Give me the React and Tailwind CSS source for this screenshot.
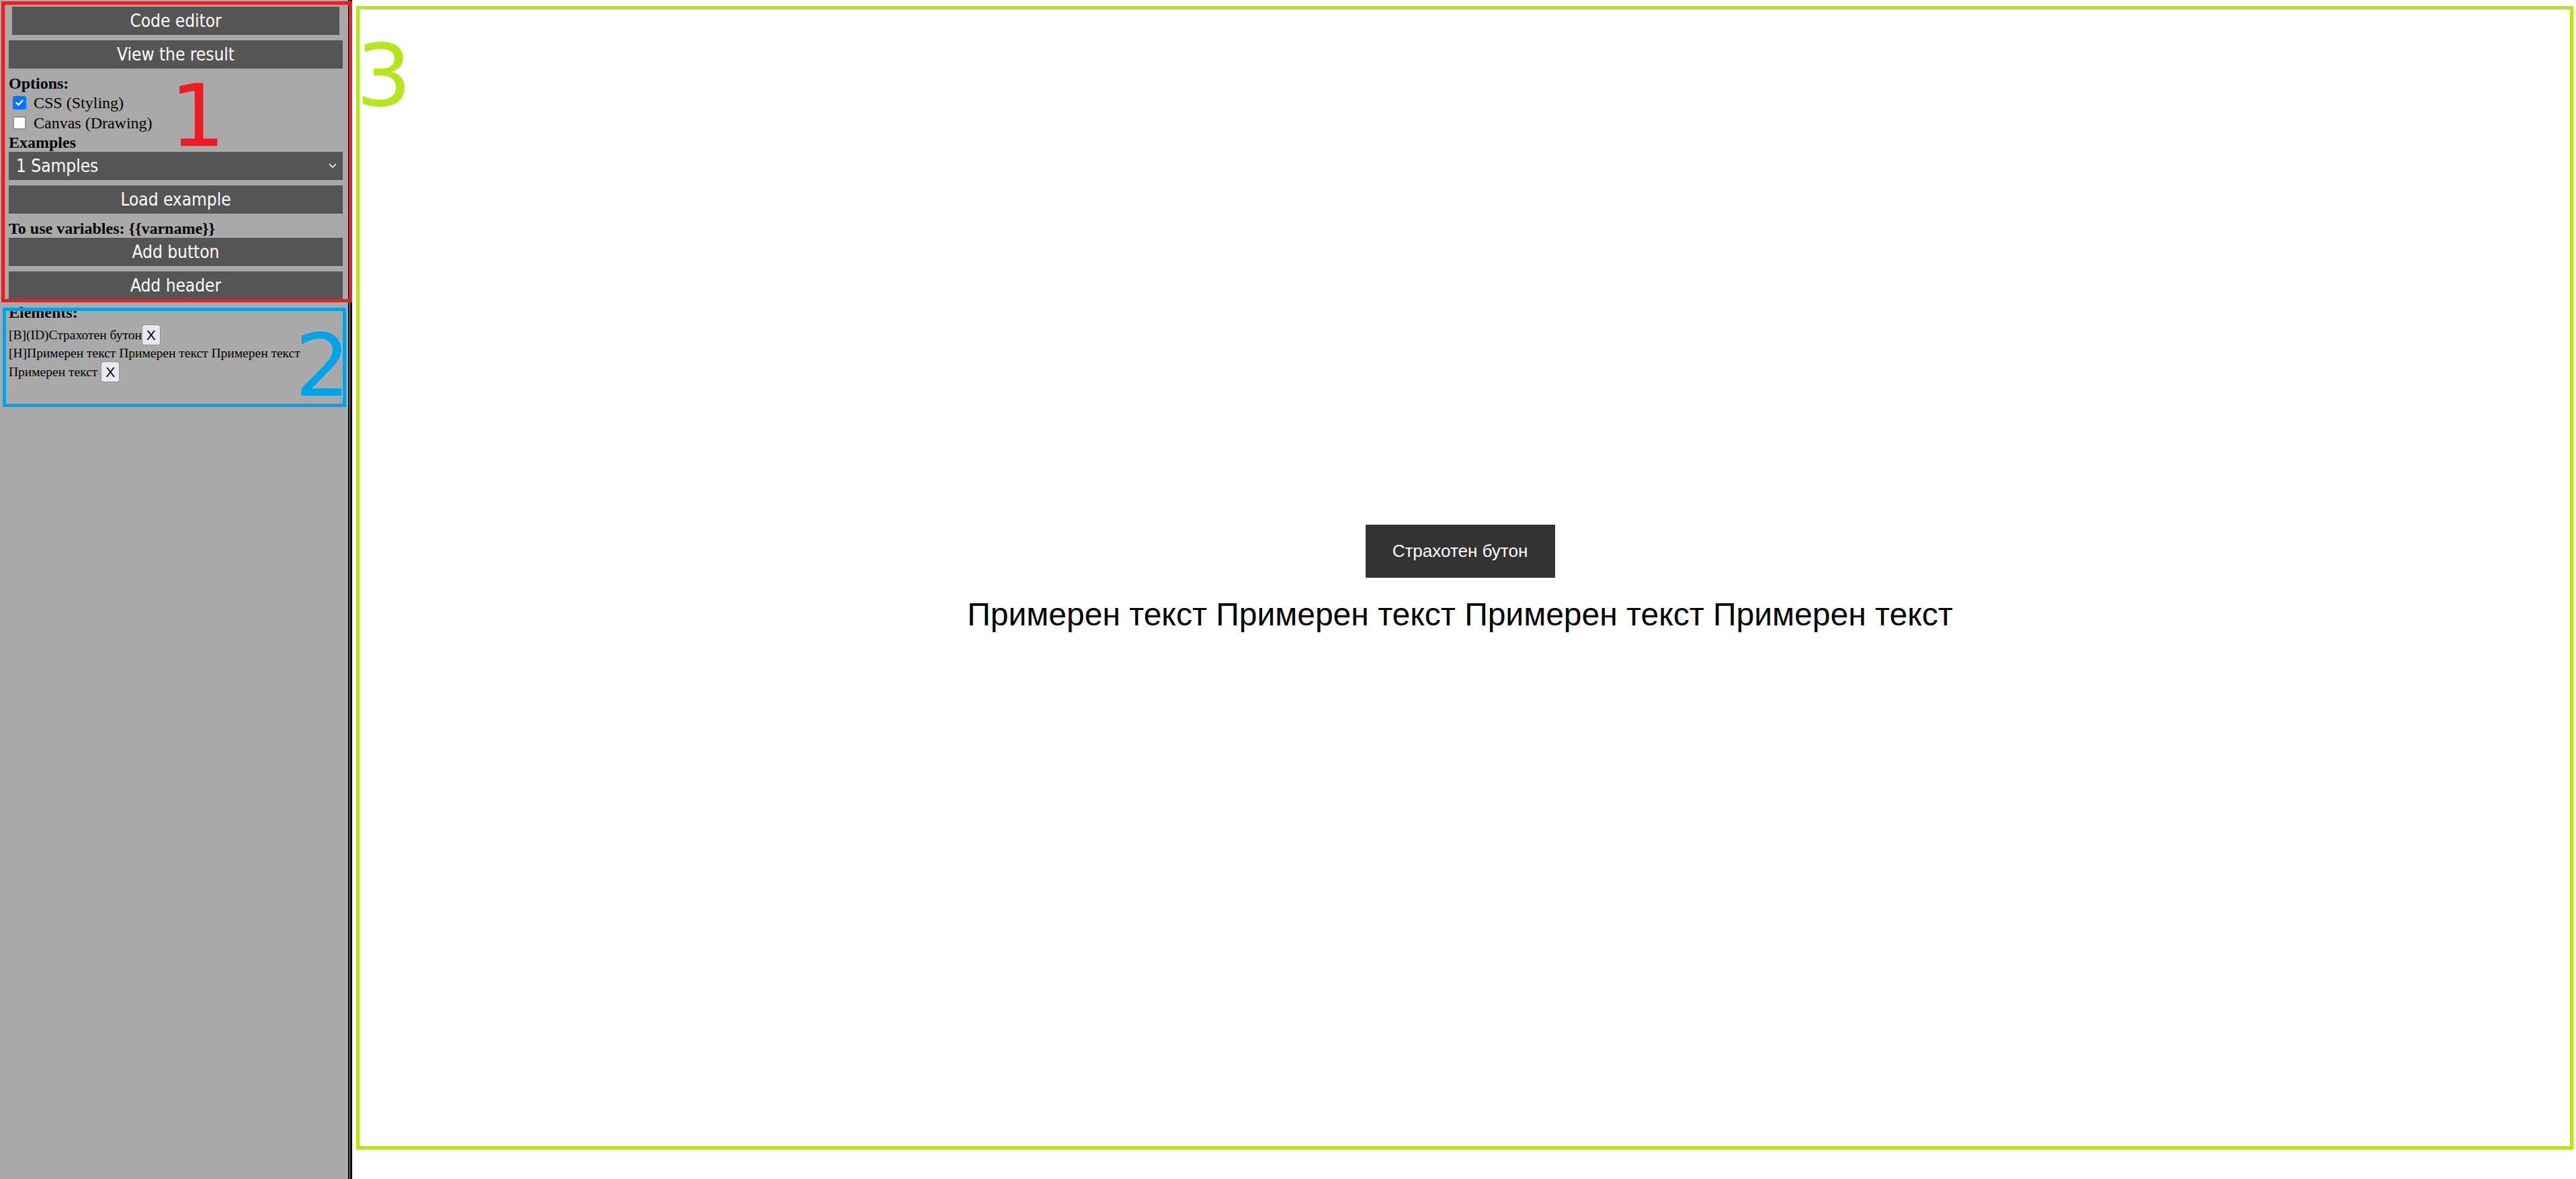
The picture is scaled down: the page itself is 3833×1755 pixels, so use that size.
import React from "react";

const btnFont = "font-['DejaVu_Sans_Condensed','DejaVu_Sans',sans-serif]";

function SideButton({ children, className = "" }) {
  return (
    <button
      className={`block h-[42px] bg-[#555555] text-white text-[26px] leading-[42px] text-center ${btnFont} ${className}`}
    >
      {children}
    </button>
  );
}

function XButton() {
  return (
    <button className="inline-flex h-[31px] w-[28px] items-center justify-center rounded-[4px] border border-[#8f8f9d] bg-[#e9e9ed] font-['Liberation_Sans',Arial,sans-serif] text-[21px] text-black">
      X
    </button>
  );
}

export default function App() {
  return (
    <div className="relative flex h-[1755px] w-[3833px] overflow-hidden bg-white">
      {/* Sidebar */}
      <aside className="h-full w-[518px] shrink-0 bg-[#a9a9a9] pl-[13px] pr-[8px] pt-[10px] font-['Liberation_Serif','Times_New_Roman',serif] text-black">
        <SideButton className="ml-[5px] w-[487px]">Code editor</SideButton>
        <SideButton className="mt-[8px] w-[497px]">View the result</SideButton>

        <div className="mt-[8px] h-[28px] text-[24px] font-bold leading-[28px]">Options:</div>
        <div className="flex h-[30px] items-center text-[24px] leading-[28px]">
          <span className="ml-[6px] flex h-[20px] w-[20px] items-center justify-center rounded-[3px] bg-[#0075ff]">
            <svg width="14" height="14" viewBox="0 0 14 14" fill="none">
              <path d="M2.5 7.2 L5.6 10.2 L11.5 3.8" stroke="white" strokeWidth="2.4" strokeLinecap="round" strokeLinejoin="round" />
            </svg>
          </span>
          <span className="ml-[11px]">CSS (Styling)</span>
        </div>
        <div className="flex h-[30px] items-center text-[24px] leading-[28px]">
          <span className="ml-[6px] block h-[20px] w-[20px] rounded-[3px] border-[2px] border-[#8f8f9d] bg-white" />
          <span className="ml-[11px]">Canvas (Drawing)</span>
        </div>
        <div className="h-[28px] text-[24px] font-bold leading-[28px]">Examples</div>

        <div className={`flex h-[42px] w-[497px] items-center justify-between bg-[#555555] pl-[11px] pr-[9px] text-[26px] text-white ${btnFont}`}>
          <span>1 Samples</span>
          <svg width="12" height="8" viewBox="0 0 12 8" fill="none">
            <path d="M1.5 1.5 L6 6 L10.5 1.5" stroke="white" strokeWidth="1.6" strokeLinecap="round" strokeLinejoin="round" />
          </svg>
        </div>

        <SideButton className="mt-[8px] w-[497px]">Load example</SideButton>
        <div className="mt-[9px] h-[27px] text-[24px] font-bold leading-[27px]">
          To use variables: {"{{varname}}"}
        </div>
        <SideButton className="w-[497px]">Add button</SideButton>
        <SideButton className="mt-[8px] w-[497px]">Add header</SideButton>

        <div className="mt-[5px] h-[28px] text-[24px] font-bold leading-[28px]">Elements:</div>
        <div className="mt-[4px] flex h-[31px] items-center text-[19.5px] leading-[23px]">
          <span>[B](ID)Страхотен бутон</span>
          <XButton />
        </div>
        <div className="h-[23px] text-[19.5px] leading-[23px]">
          [H]Примерен текст Примерен текст Примерен текст
        </div>
        <div className="mt-[1px] flex h-[31px] items-center text-[19.5px] leading-[23px]">
          <span className="whitespace-pre">Примерен текст </span>
          <XButton />
        </div>
      </aside>

      {/* Divider lines */}
      <div className="h-full w-[2px] shrink-0 bg-black" />
      <div className="h-full w-[1px] shrink-0 bg-[#a9a9a9]" />
      <div className="h-full w-[3px] shrink-0 bg-black" />

      {/* Result area */}
      <main className="flex h-full flex-1 flex-col items-center justify-center pr-[12px] font-['Liberation_Sans',Arial,sans-serif]">
        <button className="h-[79px] w-[282px] bg-[#333333] text-[26px] text-white">
          Страхотен бутон
        </button>
        <h1 className="mb-[32px] mt-[27px] text-[48px] font-normal leading-[55px] text-black">
          Примерен текст Примерен текст Примерен текст Примерен текст
        </h1>
      </main>

      {/* Annotation overlays */}
      <div className="pointer-events-none absolute left-[2px] top-[2px] h-[448px] w-[522px] border-[5px] border-[#ed1c24]" />
      <div className="pointer-events-none absolute left-[4px] top-[458px] h-[148px] w-[511px] border-[5px] border-[#00a2e8]" />
      <div className="pointer-events-none absolute left-[530px] top-[9px] h-[1702px] w-[3299px] border-[5px] border-[#b5e61d]" />

      <div className="pointer-events-none absolute left-[253px] top-[108px] font-['DejaVu_Sans',sans-serif] text-[129px] leading-none text-[#ed1c24]">1</div>
      <div className="pointer-events-none absolute left-[439px] top-[480px] font-['DejaVu_Sans',sans-serif] text-[129px] leading-none text-[#00a2e8]">2</div>
      <div className="pointer-events-none absolute left-[530px] top-[48px] font-['DejaVu_Sans',sans-serif] text-[129px] leading-none text-[#b5e61d]">3</div>
    </div>
  );
}
